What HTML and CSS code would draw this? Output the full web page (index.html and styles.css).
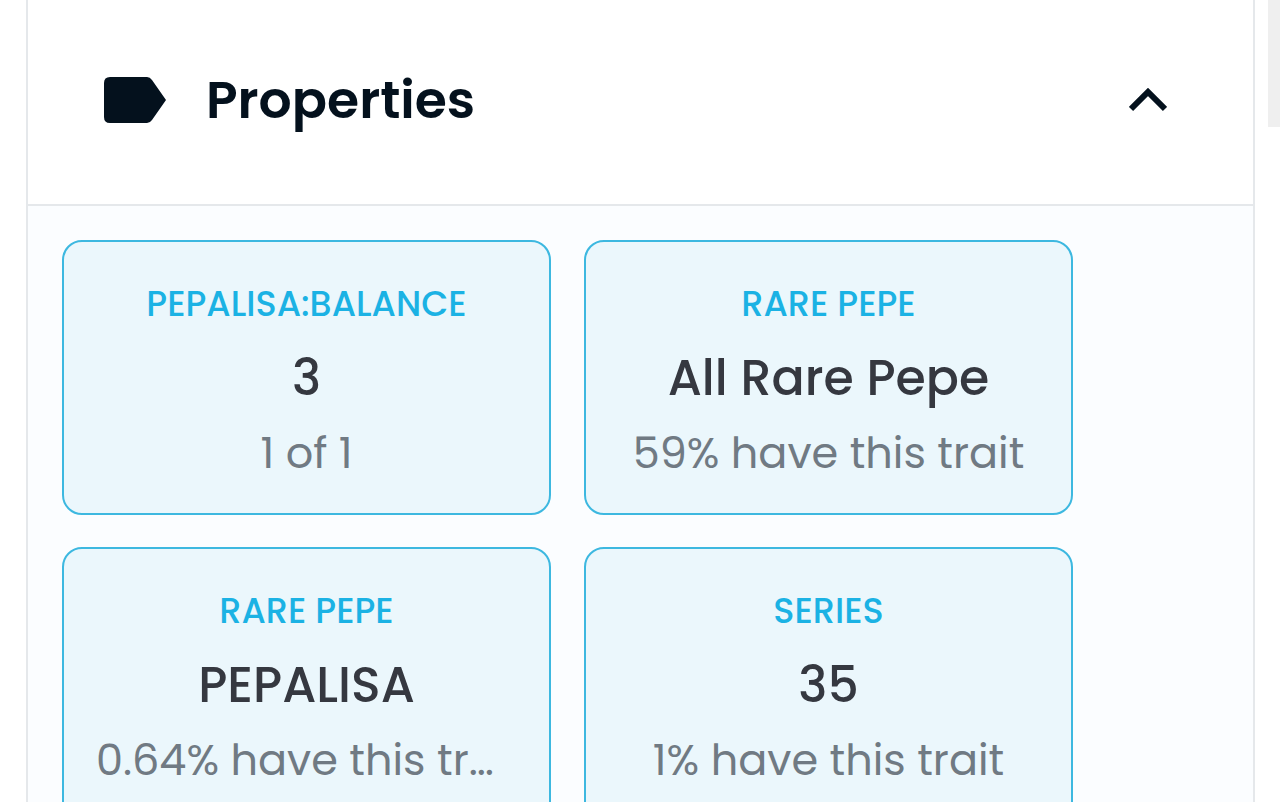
FILE: index.html
```
<!DOCTYPE html>
<html lang="en">
<head>
    <meta charset="UTF-8">
    <meta name="viewport" content="width=device-width, initial-scale=1.0">
    <title>Properties</title>
    <link rel="stylesheet" href="styles.css">
</head>
<body>
    <div class="page">
        <section class="panel">
            <h2 class="panel-title">
                <button class="panel-header" type="button" aria-expanded="true" aria-controls="properties">
                    <svg class="icon-label" viewBox="0 0 62 46" aria-hidden="true">
                        <path d="M6 0H43Q46 0 48 3L62 23L48 43Q46 46 43 46H6Q0 46 0 40V6Q0 0 6 0Z"/>
                    </svg>
                    <span>Properties</span>
                    <svg class="icon-chevron" viewBox="0 0 38 24" aria-hidden="true">
                        <path d="M2 21L19 4L36 21"/>
                    </svg>
                </button>
            </h2>
            <div class="panel-body" id="properties">
                <a class="property" href="#">
                    <div class="property-type">PEPALISA:BALANCE</div>
                    <div class="property-value">3</div>
                    <div class="property-rarity">1 of 1</div>
                </a>
                <a class="property" href="#">
                    <div class="property-type">RARE PEPE</div>
                    <div class="property-value">All Rare Pepe</div>
                    <div class="property-rarity">59% have this trait</div>
                </a>
                <a class="property" href="#">
                    <div class="property-type">RARE PEPE</div>
                    <div class="property-value">PEPALISA</div>
                    <div class="property-rarity">0.64% have this trait</div>
                </a>
                <a class="property" href="#">
                    <div class="property-type">SERIES</div>
                    <div class="property-value">35</div>
                    <div class="property-rarity">1% have this trait</div>
                </a>
            </div>
        </section>
        <div class="side"></div>
    </div>
</body>
</html>
```
FILE: styles.css
```
* {
    box-sizing: border-box;
}
body {
    font-family: Poppins, Inter, sans-serif;
    background-color: #ffffff;
    margin: 0;
}
.page {
    display: flex;
    align-items: flex-start;
    gap: 13px;
    height: 100vh;
    padding-left: 26px;
    overflow-y: auto;
    scrollbar-width: none;
}
.panel {
    flex: 1;
    border: 2px solid #e5e8eb;
    border-top: none;
    background-color: #fbfdff;
}
.panel-title {
    margin: 0;
}
.panel-header {
    display: flex;
    align-items: center;
    width: 100%;
    height: 206px;
    padding: 0 86px 4px 76px;
    border: none;
    border-bottom: 2px solid #e5e8eb;
    background-color: #ffffff;
    color: #04111d;
    font-family: inherit;
    font-size: 52px;
    font-weight: 600;
    cursor: pointer;
}
.icon-label {
    width: 62px;
    height: 46px;
    margin-right: 40px;
    fill: currentColor;
}
.icon-chevron {
    width: 38px;
    height: 24px;
    margin-left: auto;
    fill: none;
    stroke: currentColor;
    stroke-width: 6;
}
.panel-body {
    display: grid;
    grid-template-columns: repeat(auto-fill, 489px);
    gap: 32px 33px;
    padding: 34px;
}
.property {
    padding: 24px 32px 22px;
    border: 2px solid #3db8e0;
    border-radius: 20px;
    background-color: #ebf7fc;
    text-align: center;
    text-decoration: none;
    line-height: 75px;
}
.property div {
    overflow: hidden;
    text-overflow: ellipsis;
    white-space: nowrap;
}
.property-type {
    color: #1bb2e4;
    font-size: 35px;
    font-weight: 500;
}
.property-value {
    color: #353840;
    font-size: 49px;
    font-weight: 500;
}
.property-rarity {
    color: #707a83;
    font-size: 43px;
}
.side {
    width: 12px;
    height: 127px;
    background-color: #efefef;
}
```
